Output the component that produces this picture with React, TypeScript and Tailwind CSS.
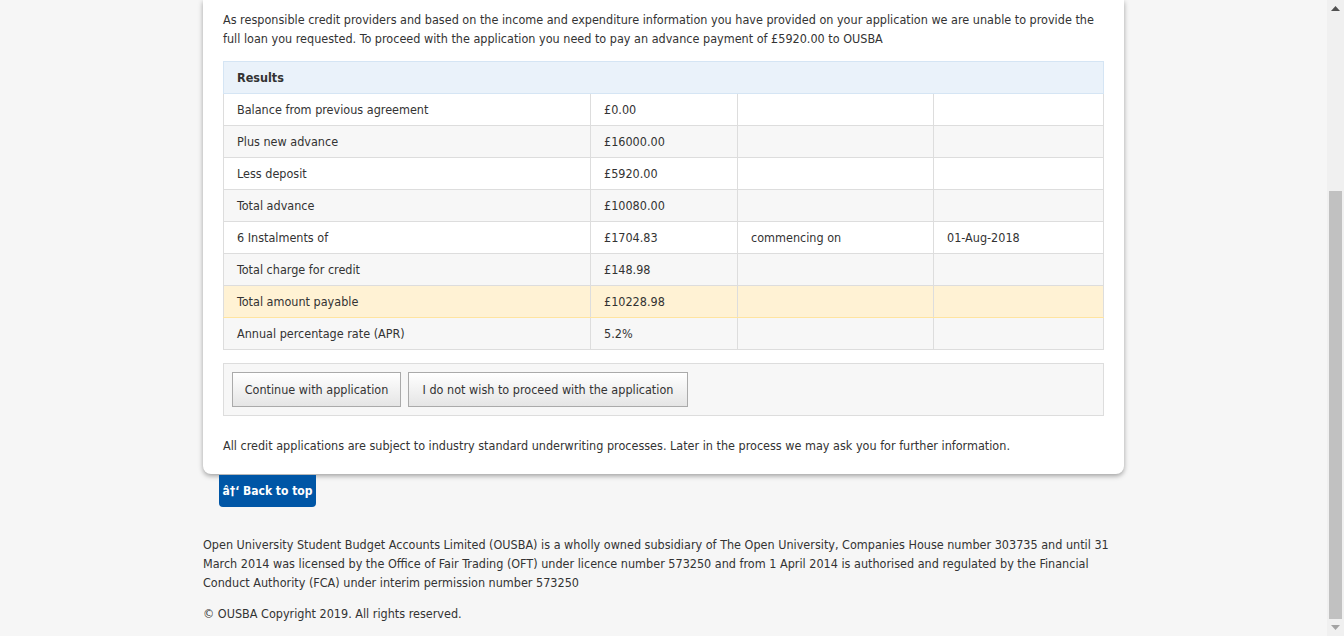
const rows: { label: string; amount: string; extra?: string; date?: string; tone: 'white' | 'grey' | 'yellow' }[] = [
  { label: 'Balance from previous agreement', amount: '£0.00', tone: 'white' },
  { label: 'Plus new advance', amount: '£16000.00', tone: 'grey' },
  { label: 'Less deposit', amount: '£5920.00', tone: 'white' },
  { label: 'Total advance', amount: '£10080.00', tone: 'grey' },
  { label: '6 Instalments of', amount: '£1704.83', extra: 'commencing on', date: '01-Aug-2018', tone: 'white' },
  { label: 'Total charge for credit', amount: '£148.98', tone: 'grey' },
  { label: 'Total amount payable', amount: '£10228.98', tone: 'yellow' },
  { label: 'Annual percentage rate (APR)', amount: '5.2%', tone: 'grey' },
];

const toneClass = {
  white: 'bg-white',
  grey: 'bg-[#f7f7f7]',
  yellow: 'bg-[#fff2d4]',
};

const cell = 'h-[32px] border border-[#dddddd] px-[13px] align-middle';

export default function App() {
  return (
    <div className="flex h-[636px] overflow-hidden bg-[#f6f6f6] font-['DejaVu_Sans_Condensed','DejaVu_Sans',sans-serif] text-[12.5px] leading-[19px] text-[#333333]">
      <div className="w-[1327px]">
        <div className="mx-auto w-[921px]">
          <div className="rounded-b-lg bg-white px-5 pt-[10px] pb-[19px] shadow-[0_2px_5px_rgba(0,0,0,0.35)]">
            <p className="mb-[13px]">
              As responsible credit providers and based on the income and expenditure information you have provided on your application we are unable to provide the full loan you requested. To proceed with the application you need to pay an advance payment of £5920.00 to OUSBA
            </p>
            <table className="w-full table-fixed border-collapse">
              <colgroup>
                <col className="w-[367px]" />
                <col className="w-[147px]" />
                <col className="w-[196px]" />
                <col />
              </colgroup>
              <thead>
                <tr className="bg-[#eaf2fa]">
                  <th colSpan={4} className="h-[32px] border border-[#d5e5f4] px-[13px] text-left font-bold">
                    Results
                  </th>
                </tr>
              </thead>
              <tbody>
                {rows.map((r) => (
                  <tr key={r.label} className={toneClass[r.tone]}>
                    <td className={r.tone === 'yellow' ? `${cell} border-y-[#ffe4a0]` : cell}>{r.label}</td>
                    <td className={r.tone === 'yellow' ? `${cell} border-y-[#ffe4a0]` : cell}>{r.amount}</td>
                    <td className={r.tone === 'yellow' ? `${cell} border-y-[#ffe4a0]` : cell}>{r.extra ?? ''}</td>
                    <td className={r.tone === 'yellow' ? `${cell} border-y-[#ffe4a0]` : cell}>{r.date ?? ''}</td>
                  </tr>
                ))}
              </tbody>
            </table>
            <div className="mt-[13px] flex gap-[7px] border border-[#dddddd] bg-[#f7f7f7] p-2">
              <button className="h-[35px] w-[169px] border border-[#aaaaaa] bg-gradient-to-b from-white to-[#e5e5e5] text-[#333333]">
                Continue with application
              </button>
              <button className="h-[35px] w-[280px] border border-[#aaaaaa] bg-gradient-to-b from-white to-[#e5e5e5] text-[#333333]">
                I do not wish to proceed with the application
              </button>
            </div>
            <p className="mt-5">
              All credit applications are subject to industry standard underwriting processes. Later in the process we may ask you for further information.
            </p>
          </div>
          <div className="ml-4 mt-px flex">
            <span className="flex h-[32px] w-[97px] items-center justify-center rounded-b bg-[#0056a6] text-[12px] font-bold text-white">
              â†‘ Back to top
            </span>
          </div>
          <p className="mt-[28px] pr-3">
            Open University Student Budget Accounts Limited (OUSBA) is a wholly owned subsidiary of The Open University, Companies House number 303735 and until 31 March 2014 was licensed by the Office of Fair Trading (OFT) under licence number 573250 and from 1 April 2014 is authorised and regulated by the Financial Conduct Authority (FCA) under interim permission number 573250
          </p>
          <p className="mt-3">© OUSBA Copyright 2019. All rights reserved.</p>
        </div>
      </div>
      <div className="flex w-[17px] flex-col items-center bg-[#f0f0f0]">
        <div className="flex h-[17px] items-center justify-center">
          <svg width="9" height="5" viewBox="0 0 9 5"><path d="M0 5 L4.5 0 L9 5 Z" fill="#505050" /></svg>
        </div>
        <div className="mt-[174px] h-[428px] w-[13px] bg-[#c1c1c1]" />
        <div className="flex h-[17px] flex-1 items-center justify-center">
          <svg width="9" height="5" viewBox="0 0 9 5"><path d="M0 0 L4.5 5 L9 0 Z" fill="#a3a3a3" /></svg>
        </div>
      </div>
    </div>
  );
}
